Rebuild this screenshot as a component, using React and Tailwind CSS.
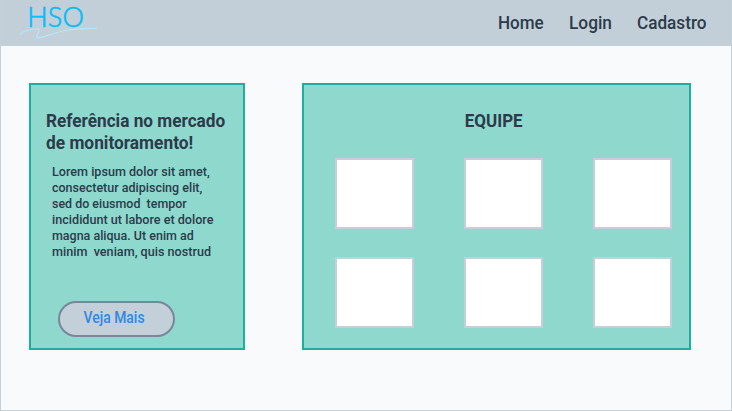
const navItems = [
  { label: 'Home', style: 'w-[71px] scale-x-[0.945]' },
  { label: 'Login', style: 'w-[68px] scale-x-[0.96]' },
  { label: 'Cadastro', style: 'w-[72px] scale-x-[0.953]' },
];

const textLines = [
  { text: 'Lorem ipsum dolor sit amet,', style: 'scale-x-[0.969]' },
  { text: 'consectetur adipiscing elit,', style: 'scale-x-[0.962]' },
  { text: 'sed do eiusmod  tempor', style: 'scale-x-[0.957]' },
  { text: 'incididunt ut labore et dolore', style: 'scale-x-[0.97]' },
  { text: 'magna aliqua. Ut enim ad', style: 'scale-x-[0.96]' },
  { text: 'minim  veniam, quis nostrud', style: 'scale-x-[0.97]' },
];

const team = [1, 2, 3, 4, 5, 6];

function Logo() {
  return (
    <svg className="ml-[18px] h-[46px] w-[82px]" viewBox="18 0 82 46" role="img" aria-label="HSO">
      <text x="27.3" y="27" fontSize="27" fill="#08bdf8" stroke="#08bdf8" strokeWidth="0.7" className="font-['Lato',sans-serif] font-light" textLength="56.5">
        HSO
      </text>
      <path
        d="M20 34.5C24 30.5 31 29 38.5 28.8C41 29 36 34.5 36.5 38C46 37.5 54 32.5 65 30.5C76 28.7 87 28 97 28.5"
        fill="none"
        stroke="#b3e8fa"
        strokeWidth="1.1"
      />
    </svg>
  );
}

export default function App() {
  return (
    <div className="flex h-[411px] w-[732px] flex-col overflow-hidden border-x border-b border-[#c3cfd9] bg-[#f8fafc] font-['Roboto',sans-serif] text-[#2b3b4a]">
      <header className="-mx-px flex h-[46px] shrink-0 items-start justify-between bg-[#c3cfd8]">
        <Logo />
        <nav className="flex pr-[23px] pt-[12px] text-[18px] leading-[22px] font-medium">
          {navItems.map((item) => (
            <a key={item.label} className={`block origin-left whitespace-nowrap ${item.style}`}>{item.label}</a>
          ))}
        </nav>
      </header>
      <main className="flex gap-[57px] pl-[28px] pt-[37px]">
        <section className="h-[267px] w-[216px] border-2 border-[#1bafa0] bg-[#8fd8ce] pl-[15px] pt-[25px]">
          <h1 className="text-[18px] leading-[22px] font-bold whitespace-nowrap">
            <span className="block origin-left scale-x-[0.956]">Referência no mercado</span>
            <span className="block origin-left scale-x-[0.961]">de monitoramento!</span>
          </h1>
          <p className="mt-[10px] ml-[6px] text-[13px] leading-[16px] font-medium whitespace-pre">
            {textLines.map((line) => (
              <span key={line.text} className={`block origin-left ${line.style}`}>{line.text}</span>
            ))}
          </p>
          <button className="mt-[41px] ml-[12px] block h-[36px] w-[117px] rounded-full border-2 border-[#78889a] bg-[#c3cfd9] pr-[4px] pb-[3px] text-[16px] leading-[18px] font-medium whitespace-nowrap text-[#3189df]">
            <span className="inline-block origin-center scale-x-[0.87]">Veja Mais</span>
          </button>
        </section>
        <section className="h-[267px] w-[389px] border-2 border-[#1bafa0] bg-[#8fd8ce] pt-[25px]">
          <h2 className="pr-[5px] text-center text-[18px] leading-[22px] font-bold">
            <span className="inline-block scale-x-[0.94]">EQUIPE</span>
          </h2>
          <div className="mt-[26px] ml-[31px] grid w-[337px] grid-cols-3 gap-x-[50px] gap-y-[28px]">
            {team.map((member) => (
              <div key={member} className="h-[71px] w-[79px] border-2 border-[#c5cfdb] bg-white" />
            ))}
          </div>
        </section>
      </main>
    </div>
  );
}
